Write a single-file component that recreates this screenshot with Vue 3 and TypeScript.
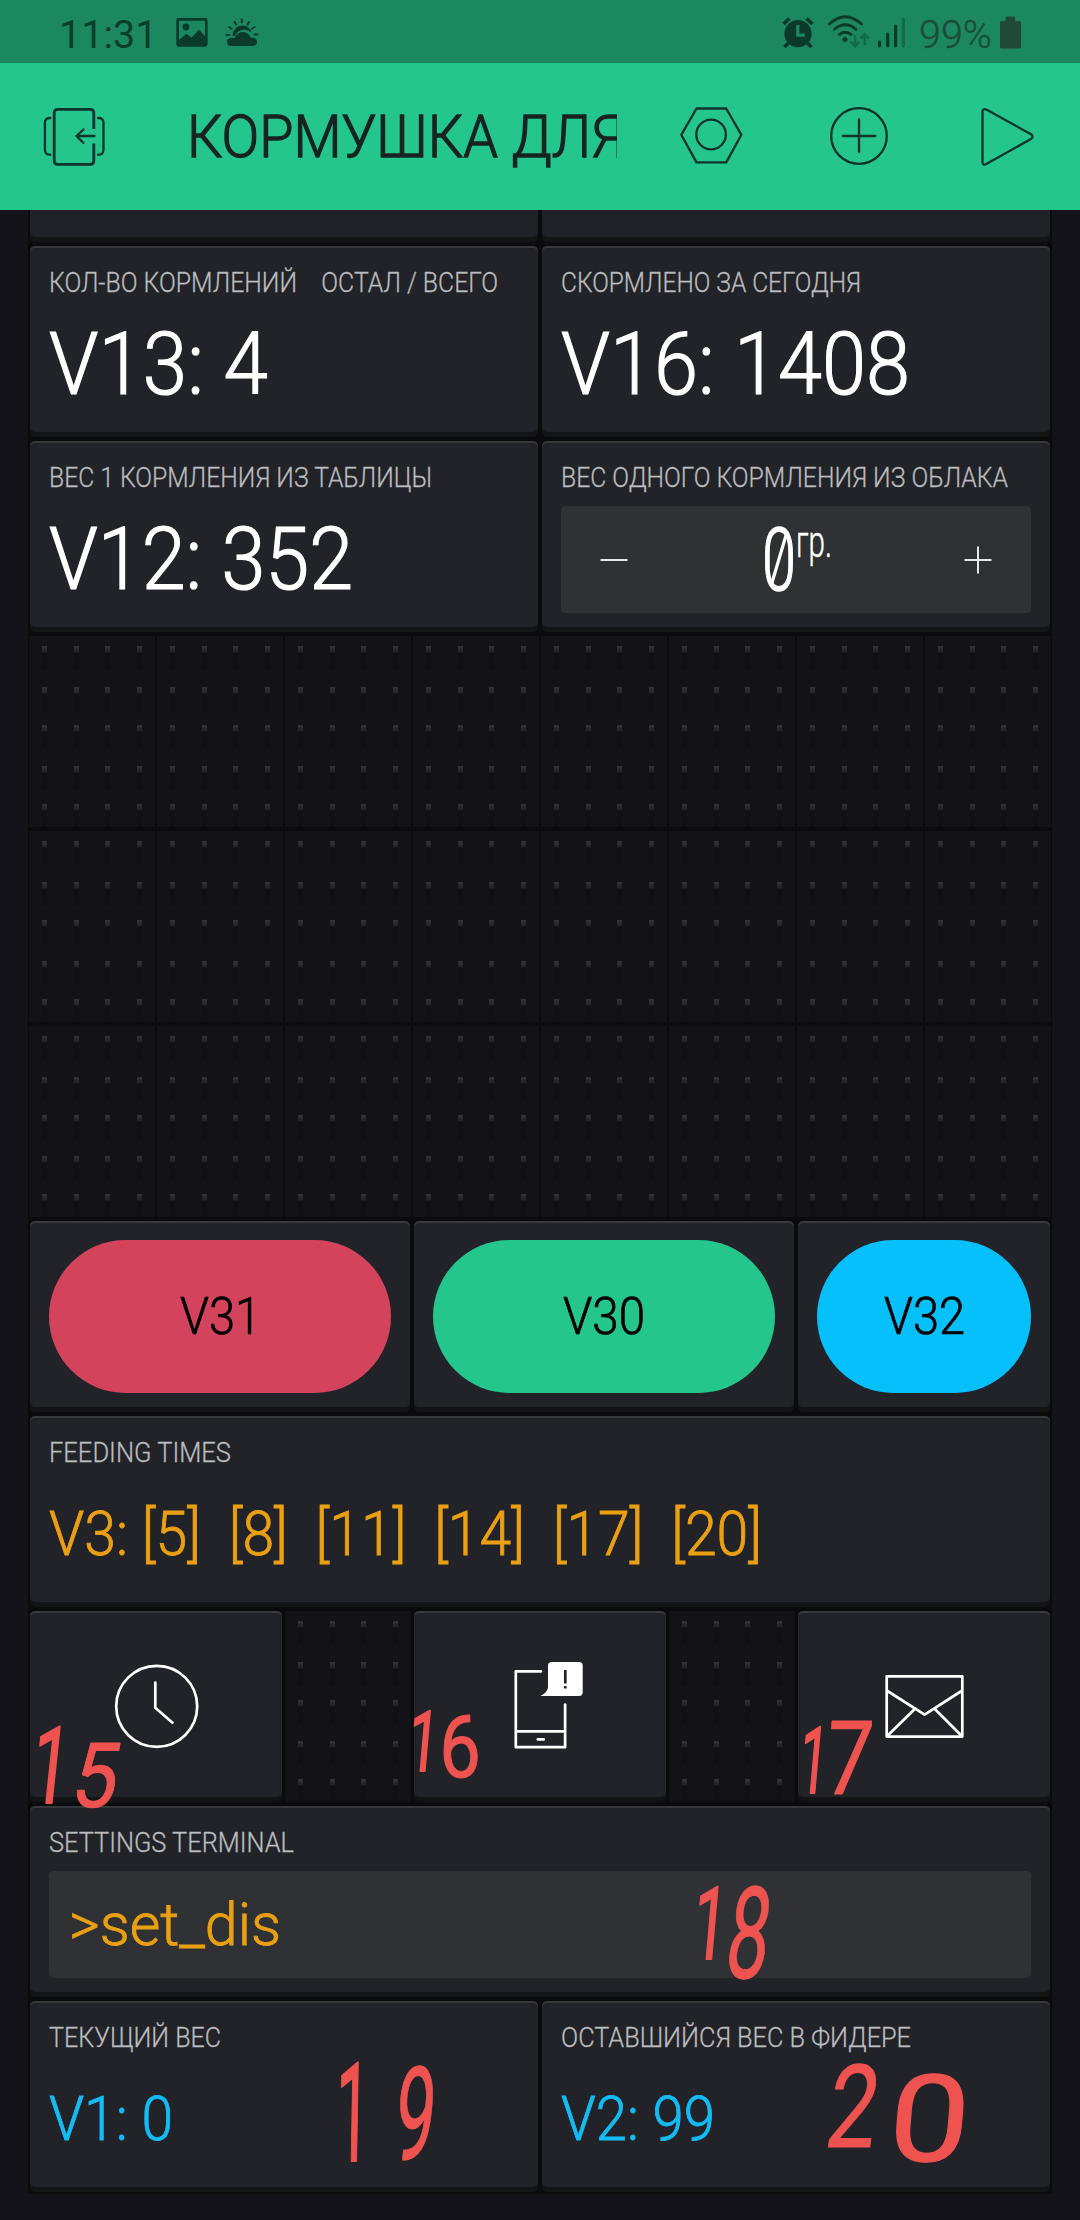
<script setup lang="ts">
import type { Directive } from 'vue'

interface DisplayCard {
  id: string
  kind: 'big' | 'line' | 'stepper' | 'button' | 'icon' | 'terminal' | 'empty'
  span: number
  label?: string
  labelWidth?: number
  value?: string
  valueWidth?: number
  tone?: string
  icon?: 'clock' | 'phone' | 'mail'
}

interface MarkDigit {
  char: string
  x: number
  y: number
  width: number
  height: number
  skew: number
}

// Condenses a run of text horizontally so that it takes the given width
const vFit: Directive<HTMLElement, number> = {
  mounted(el, binding) {
    const natural = el.getBoundingClientRect().width
    if (natural > 0 && binding.value) {
      el.style.transform = `scaleX(${binding.value / natural})`
    }
  },
}

const emptyCells = (count: number, prefix: string): DisplayCard[] =>
  Array.from({ length: count }, (_, i) => ({ id: `${prefix}${i}`, kind: 'empty', span: 1 }))

const cards: DisplayCard[] = [
  { id: 'v13', kind: 'big', span: 4, label: 'КОЛ-ВО КОРМЛЕНИЙ\u00a0\u00a0\u00a0 ОСТАЛ / ВСЕГО', labelWidth: 449, value: 'V13: 4', valueWidth: 219 },
  { id: 'v16', kind: 'big', span: 4, label: 'СКОРМЛЕНО ЗА СЕГОДНЯ', labelWidth: 300, value: 'V16: 1408', valueWidth: 349 },
  { id: 'v12', kind: 'big', span: 4, label: 'ВЕС 1 КОРМЛЕНИЯ ИЗ ТАБЛИЦЫ', labelWidth: 383, value: 'V12: 352', valueWidth: 304 },
  { id: 'cloud', kind: 'stepper', span: 4, label: 'ВЕС ОДНОГО КОРМЛЕНИЯ ИЗ ОБЛАКА', labelWidth: 447 },
  ...emptyCells(24, 'free'),
  { id: 'v31', kind: 'button', span: 3, value: 'V31', valueWidth: 81, tone: 'red' },
  { id: 'v30', kind: 'button', span: 3, value: 'V30', valueWidth: 82, tone: 'green' },
  { id: 'v32', kind: 'button', span: 2, value: 'V32', valueWidth: 81, tone: 'blue' },
  { id: 'v3', kind: 'line', span: 8, label: 'FEEDING TIMES', labelWidth: 182, value: 'V3: [5]  [8]  [11]  [14]  [17]  [20]', valueWidth: 713, tone: 'amber' },
  { id: 'timer', kind: 'icon', span: 2, icon: 'clock' },
  ...emptyCells(1, 'gapA'),
  { id: 'notify', kind: 'icon', span: 2, icon: 'phone' },
  ...emptyCells(1, 'gapB'),
  { id: 'mail', kind: 'icon', span: 2, icon: 'mail' },
  { id: 'terminal', kind: 'terminal', span: 8, label: 'SETTINGS TERMINAL', labelWidth: 245, value: '>set_dis', valueWidth: 212 },
  { id: 'v1', kind: 'line', span: 4, label: 'ТЕКУЩИЙ ВЕС', labelWidth: 172, value: 'V1: 0', valueWidth: 124, tone: 'sky' },
  { id: 'v2', kind: 'line', span: 4, label: 'ОСТАВШИЙСЯ ВЕС В ФИДЕРЕ', labelWidth: 350, value: 'V2: 99', valueWidth: 154, tone: 'sky' },
]

const dotColumns = [13, 45, 76, 108]
const dotRows = [10, 51, 89, 130, 168]

const marks: MarkDigit[][] = [
  [
    { char: '1', x: 47, y: 1803, width: 20, height: 76, skew: -6 },
    { char: '5', x: 91, y: 1807, width: 37, height: 64, skew: -10 },
  ],
  [
    { char: '1', x: 421, y: 1771, width: 16, height: 60, skew: -5 },
    { char: '6', x: 460, y: 1777, width: 34, height: 62, skew: 0 },
  ],
  [
    { char: '1', x: 811, y: 1793, width: 15, height: 66, skew: -5 },
    { char: '7', x: 847, y: 1794, width: 38, height: 73, skew: -4 },
  ],
  [
    { char: '1', x: 707, y: 1959, width: 18, height: 72, skew: -5 },
    { char: '8', x: 744, y: 1978, width: 35, height: 91, skew: -7 },
  ],
  [
    { char: '1', x: 352, y: 2161, width: 18, height: 98, skew: -1 },
    { char: '9', x: 412, y: 2160, width: 33, height: 93, skew: -5 },
  ],
  [
    { char: '2', x: 848, y: 2147, width: 41, height: 82, skew: -8 },
    { char: '0', x: 926, y: 2161, width: 66, height: 86, skew: -5 },
  ],
]

const digitTransform = (d: MarkDigit): string => {
  const size = d.height / 0.711
  const ink = d.char === '1' ? 0.3 : 0.46
  return `translate(${d.x} ${d.y}) skewX(${d.skew}) scale(${(d.width / (ink * size)).toFixed(3)} 1)`
}
</script>

<template>
  <div class="screen">
    <div class="status">
      <span class="clock-text">11:31</span>
      <svg class="status-left" width="84" height="32" viewBox="175 17 84 32">
        <path fill-rule="evenodd" d="M179 18h26q2.600 0 2.600 2.600v23.500q0 2.600-2.600 2.600h-26q-2.700 0-2.700-2.600V20.600q0-2.600 2.700-2.600zM179 20.700v19l7.500-6 5 4 7.500-8 6 6.500V20.700z" />
        <circle cx="186" cy="27" r="3.400" />
        <path d="M231 46q-4-.4-4-4t4-4.200q2 0 3.500.3 2.500-6 8-6 5.500 0 8.500 5.700 6-.5 6 4.200 0 3.600-4 4z" />
        <path d="M232.500 36q.5-10 10-10.500 7 .3 9 7-3.500-3.200-8.500-2.800-6 .8-8 6.300z" />
        <path class="ray" d="M226.500 35h3M254.500 34.500h3M229 27l2.500 1.800M254.500 27l-2.600 1.800M234.500 22l1.500 2.600M249 22l-1.500 2.600M241.700 19.500v3" />
      </svg>
      <svg class="status-right" width="126" height="34" viewBox="781 15 126 34">
        <circle cx="798" cy="33.700" r="13.600" />
        <path class="alarm-limb" d="M783.500 24l6-5.500M812.500 24l-6-5.500M788.500 43l-4 4M807.500 43l4 4" />
        <path class="alarm-hand" d="M797.800 25v10.200h7" />
        <path class="wave" d="M829.500 24q15.500-14.500 32 0M834.500 29.300q10.500-9 21.500 0M839.500 34.300q5.500-4 11.500 0" />
        <circle cx="845" cy="39.500" r="2.500" />
        <path class="traffic" d="M855 36v10M851.500 42.500l3.500 3.800 3.500-3.800M864.800 44V34M861.300 37.800l3.500-3.800 3.500 3.800" />
        <path class="bars" d="M879.500 42v3.800M887.700 34v11.800M895.600 26v19.800" />
        <path class="bars dim" d="M903.300 19v26.800" />
      </svg>
      <span class="percent">99%</span>
      <svg class="battery" width="22" height="34" viewBox="1000 15 22 34">
        <path d="M1005.700 21v-3q0-1.500 1.500-1.500h6.500q1.500 0 1.500 1.500v3h4q1.800 0 1.800 1.800v24q0 1.800-1.800 1.800h-17.400q-1.800 0-1.800-1.800v-24q0-1.800 1.800-1.800z" />
      </svg>
    </div>

    <header class="bar">
      <svg class="bar-icon exit" width="64" height="62" viewBox="42 105 64 62">
        <path class="bold" d="M93.800 129v-16q0-3.700-3.700-3.700H57.900q-3.700 0-3.700 3.700v47.700q0 3.700 3.700 3.700h32.200q3.700 0 3.700-3.700V143.500" />
        <path d="M94.500 136H76.500M83.500 129.500L76.500 136l7 7M50.300 118q-5.400-.3-5.400 5v26.500q0 5.500 5.400 5.200M98 118q5.500-.3 5.500 5v26.500q0 5.500-5.500 5.200" />
      </svg>
      <div class="title"><span v-fit="438">КОРМУШКА ДЛЯ</span></div>
      <svg class="bar-icon nut" width="64" height="62" viewBox="679 105 64 62">
        <path d="M681.300 134.800L696.500 108.500h29.700l15.200 26.300-15.200 27.600h-29.700z" />
        <circle cx="711.100" cy="134.500" r="14.800" />
      </svg>
      <svg class="bar-icon add" width="62" height="62" viewBox="828 105 62 62">
        <circle cx="859" cy="136" r="27.800" />
        <path d="M843 136h32.300M859 119.500v32.500" />
      </svg>
      <svg class="bar-icon play" width="56" height="62" viewBox="979 105 56 62">
        <path d="M982.500 112q0-4 3.800-2.400l44.700 24.600q3.200 2.300 0 4.700L986.300 164q-3.800 1.800-3.800-2z" />
      </svg>
    </header>

    <main class="board">
      <div class="cut" />
      <div class="cut" />
      <template v-for="card in cards" :key="card.id">
        <div v-if="card.kind === 'empty'" class="cell">
          <svg width="126" height="191" viewBox="0 0 126 191">
            <defs>
              <linearGradient id="peg" x1="0" y1="0" x2="0" y2="1">
                <stop offset="0" stop-color="#343437" />
                <stop offset="1" stop-color="#202024" />
              </linearGradient>
            </defs>
            <template v-for="y in dotRows" :key="y">
              <g v-for="x in dotColumns" :key="x">
                <rect :x="x" :y="y + 6" width="5" height="18" fill="#101013" />
                <rect :x="x" :y="y" width="5" height="6.500" fill="url(#peg)" />
              </g>
            </template>
          </svg>
        </div>

        <section v-else class="card" :class="['span-' + card.span, card.kind]">
          <p v-if="card.label" class="label"><span v-fit="card.labelWidth ?? 0">{{ card.label }}</span></p>

          <p v-if="card.kind === 'big' || card.kind === 'line'" class="value" :class="card.tone">
            <span v-fit="card.valueWidth ?? 0">{{ card.value }}</span>
          </p>

          <div v-else-if="card.kind === 'button'" class="pill" :class="card.tone">
            <span class="pill-box" :style="{ width: card.valueWidth + 'px' }"><span v-fit="card.valueWidth ?? 0">{{ card.value }}</span></span>
          </div>

          <div v-else-if="card.kind === 'terminal'" class="field prompt">
            <span v-fit="card.valueWidth ?? 0">{{ card.value }}</span>
          </div>

          <div v-else-if="card.kind === 'stepper'" class="field stepper-row">
            <svg width="28" height="28" viewBox="0 0 28 28"><path d="M.5 14h27" /></svg>
            <div class="amount">
              <span class="zero"><span v-fit="34">0</span>
                <svg class="slash" width="20" height="58" viewBox="0 0 20 58"><path d="M2 56L18 2" /></svg>
              </span>
              <span class="unit"><span v-fit="36">гр.</span></span>
            </div>
            <svg width="28" height="28" viewBox="0 0 28 28"><path d="M.5 14h27M14 .5v27" /></svg>
          </div>

          <svg v-else-if="card.icon === 'clock'" class="glyph" width="252" height="186" viewBox="0 0 252 186">
            <circle cx="126.700" cy="95.300" r="40.500" />
            <path d="M125.300 71.500v25.200l17.200 15" />
          </svg>
          <svg v-else-if="card.icon === 'phone'" class="glyph" width="252" height="186" viewBox="0 0 252 186">
            <path d="M127 60.300h-25.200v75.900h49.300V93.500M102 120.400h49M123.800 128.400h6" />
            <path class="solid" d="M138 51h27q3.700 0 3.700 3.700v26.600q0 3.700-3.700 3.700h-38.500q5.500-2.500 7.500-8V54.700q0-3.700 4-3.700z" />
            <path class="notch" d="M151.300 59v13.500M151.300 75v2.600" />
          </svg>
          <svg v-else class="glyph" width="252" height="186" viewBox="0 0 252 186">
            <path d="M88.700 65.300h75.600v60.300H88.700zM88.700 79.500l37.900 24.200 37.700-24.200M117.300 97.500L88.700 125.500M136.300 97.500l28 28" />
          </svg>
        </section>
      </template>
    </main>

    <svg class="marks" width="1080" height="2220" viewBox="0 0 1080 2220">
      <g v-for="(mark, i) in marks" :key="i">
        <text
          v-for="digit in mark"
          :key="digit.char"
          :class="{ stem: digit.char === '1' }"
          :transform="digitTransform(digit)"
          :font-size="digit.height / 0.711"
        >{{ digit.char }}</text>
      </g>
    </svg>
  </div>
</template>

<style>
body {
  background: #14131a;
}
</style>

<style scoped>
.screen {
  position: relative;
  width: 1080px;
  height: 2220px;
  overflow: hidden;
  background: #14131a;
  font-family: Roboto, "Noto Sans", sans-serif;
  font-weight: 300;
}

p {
  margin: 0;
}

.status {
  display: flex;
  box-sizing: border-box;
  height: 63px;
  background: #1b8862;
  color: #0b3d2b;
  fill: #0b3a2a;
  font-size: 39.500px;
  line-height: 69px;
}

.clock-text {
  width: 116px;
  padding-left: 59px;
  font-weight: 400;
}

.status-left,
.status-right,
.battery {
  flex: none;
  margin-top: 17px;
}

.status-right {
  margin: 15px 0 0 522px;
}

.percent {
  width: 81px;
  padding-left: 12px;
  color: #1b4c39;
  -webkit-text-stroke: 0.4px;
}

.battery {
  margin-top: 15px;
  fill: #21493a;
}

.ray,
.alarm-limb,
.wave,
.traffic,
.bars,
.alarm-hand {
  fill: none;
  stroke: #0b3a2a;
  stroke-width: 2;
  stroke-linecap: round;
}

.alarm-limb {
  stroke-width: 3.600;
  stroke-linecap: butt;
}

.alarm-hand {
  stroke: #1b8862;
  stroke-width: 3.200;
  stroke-linecap: butt;
}

.wave {
  stroke-width: 2.800;
}

.traffic {
  stroke: #126b4b;
  stroke-width: 2.600;
}

.bars {
  stroke-width: 3.200;
}

.bars.dim {
  stroke: #126b4b;
}

.bar {
  display: flex;
  align-items: flex-start;
  height: 147px;
  background: #25c58e;
}

.bar-icon {
  flex: none;
  margin-top: 42px;
  fill: none;
  stroke: #10332a;
  stroke-width: 2.300;
  stroke-linecap: round;
  stroke-linejoin: round;
}

.bar-icon .bold {
  stroke-width: 2.800;
  stroke-linecap: butt;
}

.exit {
  margin-left: 42px;
}

.title {
  width: 429px;
  margin-left: 82px;
  overflow: hidden;
  color: #172421;
  font-size: 60px;
  line-height: 147px;
  white-space: pre;
  -webkit-text-stroke: 0.022em;
}

.nut {
  margin-left: 62px;
}

.add {
  margin-left: 85px;
}

.play {
  margin-left: 89px;
}

.title span,
.label span,
.value span,
.prompt span,
.pill-box span,
.zero > span,
.unit > span {
  display: inline-block;
  transform-origin: 0 50%;
  white-space: pre;
}

.title span {
  margin-left: -1px;
}

.board {
  display: grid;
  grid-template-columns: repeat(8, 128px);
  grid-template-rows: 32px;
  grid-auto-rows: 191px;
  row-gap: 4px;
  width: 1024px;
  margin-left: 28px;
  padding-bottom: 2px;
  background: #0b0b0e;
}

.cut {
  grid-column: span 4;
  height: 27px;
  margin: 0 2px;
  border-radius: 0 0 5px 5px;
  background: #212227;
  box-shadow: 0 5px 0 #131415;
}

.cell {
  margin: 0 1px;
  background: #131217;
}

.cell svg {
  display: block;
}

.card {
  box-sizing: border-box;
  height: 186px;
  margin: 0 2px;
  padding: 21px 19px 0;
  border-radius: 5px;
  background: #222328;
  box-shadow: inset 0 2px 0 #37383c, 0 5px 0 #131415;
  -webkit-text-stroke: 0.014em;
}

.span-2 {
  grid-column: span 2;
}

.span-3 {
  grid-column: span 3;
}

.span-4 {
  grid-column: span 4;
}

.span-8 {
  grid-column: span 8;
}

.label {
  height: 32px;
  color: #bbbcbf;
  font-size: 28px;
  line-height: 32px;
  -webkit-text-stroke: 0.3px;
}

.value {
  margin-top: 36px;
  height: 60px;
  font-size: 60.500px;
  line-height: 60px;
  -webkit-text-stroke: 0.014em;
}

.big .value {
  height: 90px;
  margin-top: 20px;
  color: #fff;
  font-size: 87px;
  line-height: 90px;
}

.amber,
.prompt {
  color: #eaa012;
}

.sky {
  color: #14bcf5;
}

.card.button {
  padding-top: 19px;
}

.pill {
  display: flex;
  align-items: center;
  justify-content: center;
  height: 153px;
  border-radius: 77px;
  color: #000;
  font-size: 52px;
  -webkit-text-stroke: 0.014em;
}

.pill-box {
  display: block;
}

.red {
  background: #d3435c;
}

.green {
  background: #25c58e;
}

.blue {
  background: #05c0fb;
}

.field {
  display: flex;
  align-items: center;
  height: 107px;
  margin-top: 12px;
  border-radius: 5px;
  background: #303134;
}

.prompt {
  padding-left: 20px;
  font-size: 60px;
  -webkit-text-stroke: 0.014em;
}

.stepper-row {
  box-sizing: border-box;
  justify-content: space-between;
  padding: 0 39px;
  color: #fff;
}

.stepper-row svg {
  fill: none;
  stroke: #e8e8e9;
  stroke-width: 2;
}

.amount {
  display: flex;
  align-items: flex-start;
  width: 70px;
  height: 107px;
  margin-left: 2px;
}

.zero {
  position: relative;
  width: 34px;
  font-size: 88px;
  line-height: 107px;
  -webkit-text-stroke: 1.400px;
}

.stepper-row .slash {
  position: absolute;
  top: 24px;
  left: 7px;
  stroke: #fff;
  stroke-width: 3.200;
}

.unit {
  font-size: 44px;
  line-height: 73px;
  -webkit-text-stroke: 0.5px;
}

.card.icon {
  padding: 0;
}

.glyph {
  display: block;
  fill: none;
  stroke: #fff;
  stroke-width: 2.700;
  stroke-linecap: round;
  stroke-linejoin: round;
}

.glyph .solid {
  fill: #fff;
  stroke: none;
}

.glyph .notch {
  stroke: #222328;
  stroke-linecap: butt;
}

.marks {
  position: absolute;
  top: 0;
  left: 0;
  fill: #ef5350;
  font-weight: 400;
  text-anchor: middle;
  pointer-events: none;
}

.marks text {
  stroke: #ef5350;
  stroke-width: 1;
  stroke-linejoin: round;
}

.marks .stem {
  stroke-width: 2;
}
</style>
